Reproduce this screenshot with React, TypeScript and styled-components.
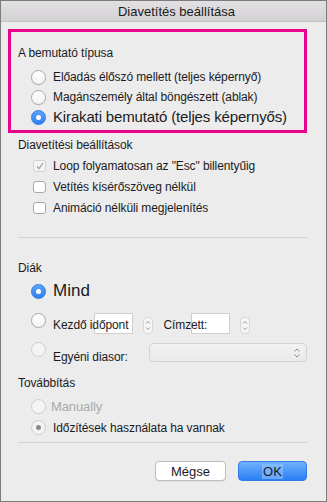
import React from "react";
import styled, { createGlobalStyle, css } from "styled-components";

const Global = createGlobalStyle`
  html, body { margin: 0; padding: 0; background: #ececec; }
  body { font-family: "Liberation Sans", Arial, sans-serif; }
  * { box-sizing: border-box; }
`;

const Window = styled.div`
  width: 327px;
  height: 502px;
  border: 1px solid #7c7c7c;
  background: #ececec;
  display: flex;
  flex-direction: column;
  overflow: hidden;
  color: #1b1b1f;
`;

const TitleBar = styled.div`
  height: 21px;
  flex: none;
  background: linear-gradient(#e2e0e2, #d3d1d3);
  border-bottom: 1px solid #c4c4c4;
  display: flex;
  align-items: center;
  justify-content: center;
  padding-left: 26px;
  font-size: 13px;
  color: #1a1a1a;
`;

const Body = styled.div`
  display: flex;
  flex-direction: column;
  padding: 0 19px 0 17px;
`;

const Highlight = styled.div`
  margin: 7px 0 0 -10px;
  width: 299px;
  height: 104px;
  border: 3px solid #e8048a;
  padding: 14px 0 0 7px;
  display: flex;
  flex-direction: column;
`;

const GroupLabel = styled.div<{ $mt?: number }>`
  font-size: 12px;
  line-height: 14px;
  height: 14px;
  margin-top: ${(p) => p.$mt ?? 0}px;
  letter-spacing: -0.1px;
`;

const Row = styled.div<{ $h?: number; $mt?: number; $top?: boolean }>`
  display: flex;
  align-items: ${(p) => (p.$top ? "flex-start" : "center")};
  height: ${(p) => p.$h ?? 20}px;
  margin-top: ${(p) => p.$mt ?? 0}px;
  padding-left: 13px;
`;

const RowText = styled.span<{ $size?: number; $disabled?: boolean; $gap?: number; $mt?: number }>`
  font-size: ${(p) => p.$size ?? 12}px;
  line-height: 14px;
  margin-left: ${(p) => p.$gap ?? 7}px;
  margin-top: ${(p) => p.$mt ?? 0}px;
  color: ${(p) => (p.$disabled ? "#a9a9a9" : "#1b1b22")};
  letter-spacing: ${(p) => ((p.$size ?? 12) === 15 ? "-0.15px" : (p.$size ?? 12) > 13 ? "0" : "-0.1px")};
  white-space: nowrap;
  position: relative;
  z-index: 1;
`;

const RadioCircle = styled.span<{ $checked?: boolean; $disabled?: boolean }>`
  flex: none;
  width: 15px;
  height: 15px;
  border-radius: 50%;
  position: relative;
  ${(p) =>
    p.$checked && !p.$disabled
      ? css`
          background: linear-gradient(#5aa5fb, #2f80f2);
          border: 1px solid #2c78e2;
        `
      : p.$disabled
      ? css`
          background: #f4f4f4;
          border: 1px solid #cdcdcd;
        `
      : css`
          background: linear-gradient(#ffffff, #f3f3f3);
          border: 1px solid #a9a9a9;
          box-shadow: 0 0.5px 0.5px rgba(0, 0, 0, 0.08);
        `}
  &::after {
    content: "";
    display: ${(p) => (p.$checked ? "block" : "none")};
    position: absolute;
    left: 50%;
    top: 50%;
    width: 5px;
    height: 5px;
    margin: -2.5px 0 0 -2.5px;
    border-radius: 50%;
    background: ${(p) => (p.$disabled ? "#8c8c8c" : "#ffffff")};
  }
`;

const CheckBox = styled.span<{ $disabled?: boolean }>`
  flex: none;
  width: 13px;
  height: 12px;
  margin-left: 2px;
  border-radius: 3px;
  border: 1px solid ${(p) => (p.$disabled ? "#d0d0d0" : "#a9a9a9")};
  background: ${(p) => (p.$disabled ? "#f5f5f5" : "#ffffff")};
  display: flex;
  align-items: center;
  justify-content: center;
`;

const Separator = styled.div<{ $mt: number }>`
  height: 1px;
  background: #d3d3d3;
  margin-top: ${(p) => p.$mt}px;
`;

const NumberBox = styled.span<{ $ml: number }>`
  flex: none;
  width: 39px;
  height: 21px;
  background: #ffffff;
  border: 1px solid #cfcfcf;
  margin-left: ${(p) => p.$ml}px;
`;

const Stepper = styled.span<{ $ml: number }>`
  flex: none;
  width: 10px;
  height: 17px;
  margin-top: 4px;
  margin-left: ${(p) => p.$ml}px;
  border-radius: 4px;
  border: 1px solid #d6d6d6;
  background: #f6f6f6;
  display: flex;
  align-items: center;
  justify-content: center;
`;

const SelectBox = styled.span`
  flex: none;
  margin-left: auto;
  margin-top: 1px;
  width: 158px;
  height: 19px;
  border-radius: 4px;
  border: 1px solid #d3d3d3;
  background: linear-gradient(#f1f1f1, #ebebeb);
  display: flex;
  align-items: center;
  justify-content: flex-end;
  padding-right: 5px;
`;

const Footer = styled.div`
  display: flex;
  justify-content: flex-end;
  gap: 12px;
  margin-top: 18px;
`;

const Button = styled.button<{ $primary?: boolean }>`
  height: 20px;
  width: ${(p) => (p.$primary ? 69 : 71)}px;
  border-radius: 4px;
  font-family: "Liberation Sans", Arial, sans-serif;
  font-size: 13px;
  padding: 0;
  color: #1a1a2a;
  ${(p) =>
    p.$primary
      ? css`
          background: linear-gradient(#6fb2fb, #2b7ef5);
          border: 1px solid #3479e4;
        `
      : css`
          background: #ffffff;
          border: 1px solid #bdbdbd;
          box-shadow: 0 0.5px 0.5px rgba(0, 0, 0, 0.1);
        `}
`;

const OkText = styled.span`
  background: rgba(150, 200, 255, 0.55);
  padding: 0 1px;
`;

const Chevrons = () => (
  <svg width="8" height="12" viewBox="0 0 8 12">
    <path d="M1.5 4.5 L4 2 L6.5 4.5 M1.5 7.5 L4 10 L6.5 7.5" fill="none" stroke="#8a8a8a" strokeWidth="1" />
  </svg>
);

const SmallChevrons = () => (
  <svg width="6" height="13" viewBox="0 0 6 13">
    <path d="M1 4.5 L3 2.5 L5 4.5 M1 8.5 L3 10.5 L5 8.5" fill="none" stroke="#8f8f8f" strokeWidth="0.9" />
  </svg>
);

const Check = () => (
  <svg width="10" height="10" viewBox="0 0 10 10">
    <path d="M2 5.2 L4 7.6 L8 2" fill="none" stroke="#a9a9a9" strokeWidth="1.4" />
  </svg>
);

export default function App() {
  return (
    <>
      <Global />
      <Window>
        <TitleBar>Diavetítés beállítása</TitleBar>
        <Body>
          <Highlight>
            <GroupLabel>A bemutató típusa</GroupLabel>
            <Row $mt={7}>
              <RadioCircle />
              <RowText>Előadás élőszó mellett (teljes képernyő)</RowText>
            </Row>
            <Row>
              <RadioCircle />
              <RowText>Magánszemély által böngészett (ablak)</RowText>
            </Row>
            <Row>
              <RadioCircle $checked />
              <RowText $size={15}>Kirakati bemutató (teljes képernyős)</RowText>
            </Row>
          </Highlight>

          <GroupLabel $mt={5}>Diavetítési beállítások</GroupLabel>
          <Row $h={21} $mt={3}>
            <CheckBox $disabled>
              <Check />
            </CheckBox>
            <RowText>Loop folyamatosan az "Esc" billentyűig</RowText>
          </Row>
          <Row $h={21}>
            <CheckBox />
            <RowText>Vetítés kísérőszöveg nélkül</RowText>
          </Row>
          <Row $h={21}>
            <CheckBox />
            <RowText>Animáció nélküli megjelenítés</RowText>
          </Row>

          <Separator $mt={19} />

          <GroupLabel $mt={23}>Diák</GroupLabel>
          <Row $h={22} $mt={5}>
            <RadioCircle $checked />
            <RowText $size={17}>Mind</RowText>
          </Row>
          <Row $h={21} $mt={11} $top>
            <RadioCircle />
            <RowText $mt={5}>Kezdő időpont</RowText>
            <NumberBox $ml={-34} />
            <Stepper $ml={10}>
              <SmallChevrons />
            </Stepper>
            <RowText $mt={5} $gap={10}>Címzett:</RowText>
            <NumberBox $ml={-16} />
            <Stepper $ml={10}>
              <SmallChevrons />
            </Stepper>
          </Row>
          <Row $h={20} $mt={8} $top>
            <RadioCircle $disabled />
            <RowText $mt={8}>Egyéni diasor:</RowText>
            <SelectBox>
              <Chevrons />
            </SelectBox>
          </Row>

          <GroupLabel $mt={14}>Továbbítás</GroupLabel>
          <Row $h={15} $mt={9}>
            <RadioCircle $disabled />
            <RowText $size={13} $disabled $gap={5}>
              Manually
            </RowText>
          </Row>
          <Row $h={15} $mt={6}>
            <RadioCircle $checked $disabled />
            <RowText>Időzítések használata ha vannak</RowText>
          </Row>

          <Separator $mt={7} />

          <Footer>
            <Button>Mégse</Button>
            <Button $primary>
              <OkText>OK</OkText>
            </Button>
          </Footer>
        </Body>
      </Window>
    </>
  );
}
